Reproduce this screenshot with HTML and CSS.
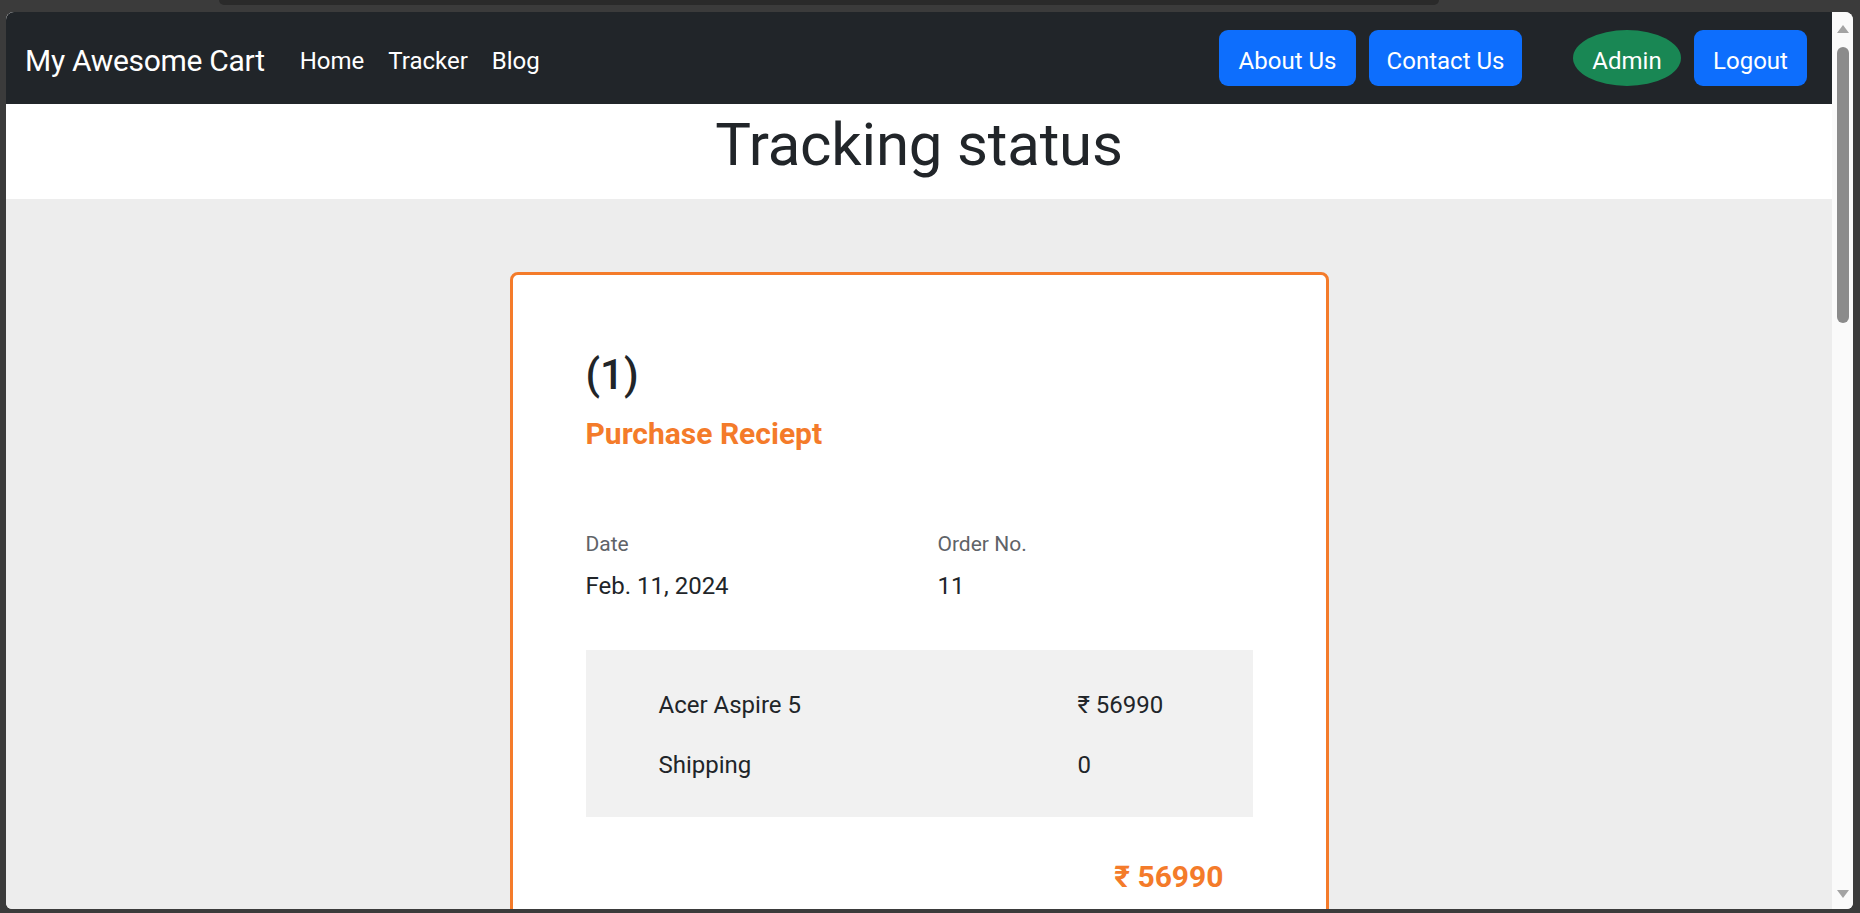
FILE: index.html
```html
<!DOCTYPE html>
<html lang="en">
<head>
<meta charset="utf-8">
<title>Tracker - My Awesome Cart</title>
<link rel="stylesheet" href="styles.css">
</head>
<body>
<div class="chrome-top"><div class="chrome-bar"></div></div>
<div class="window">
  <div class="page">
    <nav class="navbar">
      <a class="brand" href="#">My Awesome Cart</a>
      <ul class="nav-links">
        <li><a href="#">Home</a></li>
        <li><a href="#">Tracker</a></li>
        <li><a href="#">Blog</a></li>
      </ul>
      <div class="nav-actions">
        <button class="btn btn-blue btn-about">About Us</button>
        <button class="btn btn-blue btn-contact">Contact Us</button>
        <span class="badge-admin">Admin</span>
        <button class="btn btn-blue btn-logout">Logout</button>
      </div>
    </nav>
    <header class="title-band">
      <h1>Tracking status</h1>
    </header>
    <main class="content">
      <section class="card">
        <h3 class="order-num">(1)</h3>
        <h5 class="receipt-title">Purchase Reciept</h5>
        <div class="info">
          <div class="info-col">
            <span class="info-label">Date</span>
            <span class="info-value">Feb. 11, 2024</span>
          </div>
          <div class="info-col">
            <span class="info-label">Order No.</span>
            <span class="info-value">11</span>
          </div>
        </div>
        <div class="items">
          <div class="item-row"><span>Acer Aspire 5</span><span>₹ 56990</span></div>
          <div class="item-row"><span>Shipping</span><span>0</span></div>
        </div>
        <div class="total">₹ 56990</div>
      </section>
    </main>
  </div>
  <div class="scrollbar">
    <span class="sb-up"></span>
    <span class="sb-thumb"></span>
    <span class="sb-down"></span>
  </div>
</div>
</body>
</html>
```
FILE: styles.css
```css
* { box-sizing: border-box; }

html, body {
  margin: 0;
  height: 913px;
  overflow: hidden;
}

body {
  background: #3b3b3b;
  font-family: Roboto, "Liberation Sans", sans-serif;
  color: #212529;
}

.chrome-top {
  height: 12px;
  padding-left: 219px;
}

.chrome-bar {
  width: 1220px;
  height: 5px;
  background: #2a2a2a;
  border-radius: 0 0 10px 10px;
}

.window {
  display: flex;
  margin-left: 6px;
  width: 1847px;
  height: 897px;
  border-radius: 8px 8px 6px 6px;
  overflow: hidden;
  background: #ededed;
}

.page {
  flex: 1;
  min-width: 0;
  overflow: hidden;
  background: #ededed;
}

/* navbar */
.navbar {
  display: flex;
  align-items: center;
  height: 92px;
  padding: 0 25px 0 19px;
  background: #212529;
}

.brand {
  padding-top: 5px;
  font-size: 30px;
  line-height: 45px;
  color: #fff;
  text-decoration: none;
  letter-spacing: -0.3px;
  margin-right: 23px;
}

.nav-links {
  display: flex;
  list-style: none;
  margin: 0;
  padding: 5px 0 0;
}

.nav-links a {
  display: block;
  padding: 0 12px;
  font-size: 24px;
  line-height: 36px;
  color: #fff;
  text-decoration: none;
}

.nav-actions {
  display: flex;
  align-items: center;
  gap: 13px;
  margin-left: auto;
}

.btn {
  height: 56px;
  padding: 5px 0 0;
  border: 0;
  border-radius: 9px;
  font-family: inherit;
  font-size: 24px;
  color: #fff;
}

.btn-blue { background: #0d6efd; }
.btn-about { width: 137px; }
.btn-contact { width: 153px; }
.btn-logout { width: 113px; }

.badge-admin {
  display: flex;
  align-items: center;
  justify-content: center;
  width: 108px;
  height: 56px;
  margin-left: 38px;
  padding-top: 5px;
  border-radius: 50%;
  background: #198754;
  color: #fff;
  font-size: 24px;
}

/* title */
.title-band {
  height: 95px;
  padding-top: 5px;
  background: #fff;
}

.title-band h1 {
  margin: 0;
  font-size: 60px;
  font-weight: 400;
  line-height: 72px;
  text-align: center;
  letter-spacing: -0.2px;
}

/* card */
.content {
  padding-top: 73px;
}

.card {
  width: 819px;
  margin: 0 auto;
  padding: 75px 73px 40px;
  background: #fff;
  border: 3px solid #f47b2a;
  border-radius: 8px;
}

.order-num {
  margin: 0 0 16px;
  font-size: 42px;
  font-weight: 500;
  line-height: 50px;
}

.receipt-title {
  margin: 0;
  font-size: 30px;
  font-weight: 700;
  line-height: 36px;
  color: #f47b2a;
}

.info {
  display: grid;
  grid-template-columns: 352px 1fr;
  margin-top: 77px;
}

.info-col {
  display: flex;
  flex-direction: column;
}

.info-label {
  font-size: 21px;
  line-height: 31.5px;
  color: #5f6368;
  margin-bottom: 7px;
}

.info-value {
  font-size: 24px;
  line-height: 36px;
}

.items {
  display: flex;
  flex-direction: column;
  gap: 24px;
  margin-top: 46px;
  padding: 37px 0 34px 73px;
  background: #f1f1f1;
}

.item-row {
  display: grid;
  grid-template-columns: 419px 1fr;
  font-size: 24px;
  line-height: 36px;
}

.total {
  margin-top: 42px;
  padding-right: 29px;
  text-align: right;
  font-size: 30px;
  font-weight: 700;
  line-height: 36px;
  color: #f47b2a;
}

/* scrollbar */
.scrollbar {
  display: flex;
  flex-direction: column;
  align-items: center;
  width: 21px;
  padding: 13px 0 11px;
  background: #fafafa;
}

.sb-up,
.sb-down {
  width: 0;
  height: 0;
  border-left: 6px solid transparent;
  border-right: 6px solid transparent;
}

.sb-up { border-bottom: 8px solid #a3a3a3; }

.sb-down {
  margin-top: auto;
  border-top: 8px solid #a3a3a3;
}

.sb-thumb {
  width: 12px;
  height: 276px;
  margin-top: 14px;
  border-radius: 6px;
  background: #8b8b8b;
}
```
